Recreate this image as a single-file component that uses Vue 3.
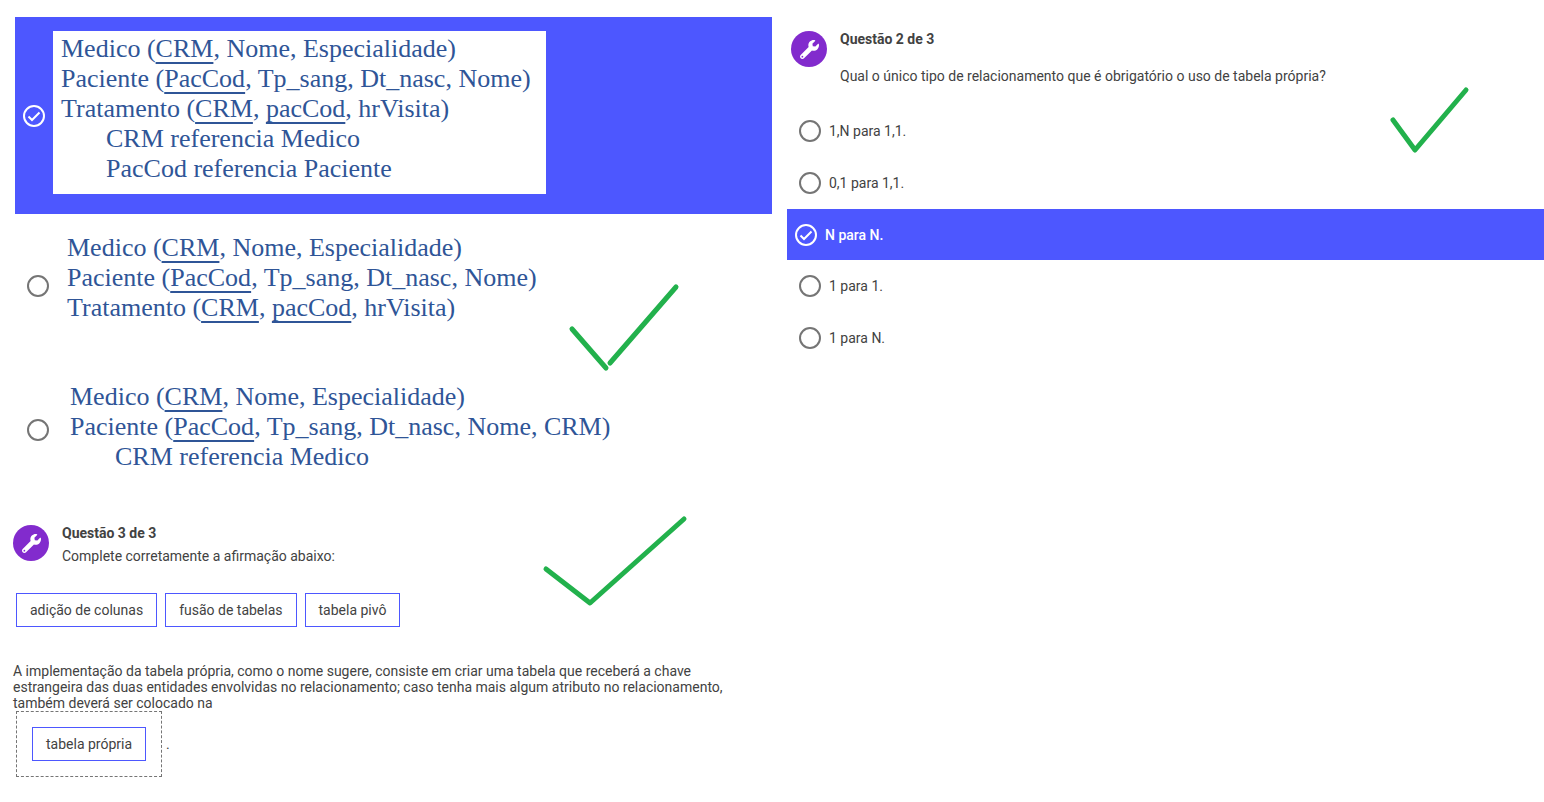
<script setup>
import { ref } from 'vue'

const medico = [{ t: 'Medico (' }, { t: 'CRM', key: true }, { t: ', Nome, Especialidade)' }]
const paciente = (end) => [{ t: 'Paciente (' }, { t: 'PacCod', key: true }, { t: `, Tp_sang, Dt_nasc, Nome${end}` }]
const tratamento = [
  { t: 'Tratamento (' }, { t: 'CRM', key: true }, { t: ', ' }, { t: 'pacCod', key: true }, { t: ', hrVisita)' },
]

const schemas = [
  {
    id: 'a',
    lines: [
      { parts: medico },
      { parts: paciente(')') },
      { parts: tratamento },
      { parts: [{ t: 'CRM referencia Medico' }], indent: true },
      { parts: [{ t: 'PacCod referencia Paciente' }], indent: true },
    ],
  },
  { id: 'b', lines: [{ parts: medico }, { parts: paciente(')') }, { parts: tratamento }] },
  {
    id: 'c',
    lines: [
      { parts: medico },
      { parts: paciente(', CRM)') },
      { parts: [{ t: 'CRM referencia Medico' }], indent: true },
    ],
  },
]
const relations = ['1,N para 1,1.', '0,1 para 1,1.', 'N para N.', '1 para 1.', '1 para N.']
const words = ['adição de colunas', 'fusão de tabelas', 'tabela pivô']

const schema = ref('a')
const relation = ref('N para N.')
</script>

<template>
  <main class="page">
    <div class="column left">
      <div class="schemas" role="radiogroup" aria-label="Esquema relacional">
        <label v-for="s in schemas" :key="s.id" class="option schema" :class="[s.id, { selected: schema === s.id }]">
          <span class="mark">
            <input v-model="schema" type="radio" name="schema" :value="s.id" />
            <svg v-if="schema === s.id" viewBox="0 0 22 22" aria-hidden="true"><path d="M5.500 11.500l3.500 3.500 7.500-7.500" /></svg>
          </span>
          <span class="sheet">
            <span v-for="(line, i) in s.lines" :key="i" class="line" :class="{ indent: line.indent }"><span v-for="(p, j) in line.parts" :key="j" :class="{ key: p.key }">{{ p.t }}</span></span>
          </span>
        </label>
      </div>

      <section class="question third">
        <header class="head">
          <span class="badge">
            <svg viewBox="0 0 512 512" aria-hidden="true"><path d="M507.7 109.1c-2.2-9-13.5-12.1-20.1-5.5l-74.4 74.4-67.9-11.3-11.3-67.9 74.4-74.4c6.600-6.600 3.400-17.900-5.700-20.200-47.400-11.700-99.600.900-136.600 37.900-39.600 39.600-50.500 97.100-34.100 147.200L18.700 402.800c-25 25-25 65.500 0 90.500s65.500 25 90.500 0l213.200-213.200c50.100 16.700 107.500 5.700 147.400-34.200 37.100-37.100 49.700-89.300 37.900-136.800zM64 472c-13.300 0-24-10.700-24-24 0-13.300 10.700-24 24-24s24 10.700 24 24c0 13.300-10.700 24-24 24z" /></svg>
          </span>
          <div>
            <h2>Questão 3 de 3</h2>
            <p>Complete corretamente a afirmação abaixo:</p>
          </div>
        </header>
        <div class="words">
          <button v-for="w in words" :key="w" type="button" class="chip">{{ w }}</button>
        </div>
        <div class="statement">
          A implementação da tabela própria, como o nome sugere, consiste em criar uma tabela que receberá a chave
          estrangeira das duas entidades envolvidas no relacionamento; caso tenha mais algum atributo no relacionamento,
          também deverá ser colocado na
          <div class="answer"><span class="drop"><button type="button" class="chip">tabela própria</button></span><span>.</span></div>
        </div>
      </section>

      <svg class="tick tick-schema" width="114" height="90" viewBox="0 0 114 90" aria-hidden="true"><path d="M5 46L39 85M43 80L109 4" /></svg>
      <svg class="tick tick-words" width="150" height="96" viewBox="0 0 150 96" aria-hidden="true"><path d="M5 56L49 90L143 6" /></svg>
    </div>

    <div class="column right">
      <section class="question second">
        <header class="head">
          <span class="badge">
            <svg viewBox="0 0 512 512" aria-hidden="true"><path d="M507.7 109.1c-2.2-9-13.5-12.1-20.1-5.5l-74.4 74.4-67.9-11.3-11.3-67.9 74.4-74.4c6.600-6.600 3.400-17.900-5.700-20.200-47.400-11.700-99.600.900-136.600 37.900-39.600 39.600-50.500 97.100-34.100 147.200L18.700 402.800c-25 25-25 65.500 0 90.500s65.500 25 90.500 0l213.200-213.200c50.100 16.700 107.500 5.700 147.400-34.200 37.100-37.100 49.700-89.300 37.900-136.800zM64 472c-13.300 0-24-10.700-24-24 0-13.300 10.700-24 24-24s24 10.700 24 24c0 13.300-10.700 24-24 24z" /></svg>
          </span>
          <div>
            <h2>Questão 2 de 3</h2>
            <p>Qual o único tipo de relacionamento que é obrigatório o uso de tabela própria?</p>
          </div>
        </header>
        <div class="relations" role="radiogroup" aria-label="Tipo de relacionamento">
          <label v-for="r in relations" :key="r" class="option relation" :class="{ selected: relation === r }">
            <span class="mark">
              <input v-model="relation" type="radio" name="relation" :value="r" />
              <svg v-if="relation === r" viewBox="0 0 22 22" aria-hidden="true"><path d="M5.500 11.500l3.500 3.500 7.500-7.500" /></svg>
            </span>
            <span>{{ r }}</span>
          </label>
        </div>
      </section>
      <svg class="tick tick-relation" width="84" height="72" viewBox="0 0 84 72" aria-hidden="true"><path d="M5 37L27 67L78 7" /></svg>
    </div>
  </main>
</template>

<style>
body {
  margin: 0;
  background: #fff;
}
</style>

<style scoped>
.page {
  display: grid;
  grid-template-columns: 1fr 1fr;
  color: #424242;
  font: 14px/16px Roboto, 'Noto Sans', sans-serif;
}
.column {
  position: relative;
  min-width: 0;
}
.left {
  padding-top: 17px;
}
.right {
  padding: 31px 0 0 15px;
}
.schemas {
  padding-left: 15px;
}
.option {
  display: flex;
  align-items: center;
  box-sizing: border-box;
  padding-left: 12px;
  gap: 8px;
}
.option.selected {
  padding-left: 8px;
  background: #4d57ff;
  color: #fff;
}
.mark {
  display: grid;
  flex: none;
  width: 22px;
  height: 22px;
}
.mark > * {
  grid-area: 1 / 1;
}
.mark input {
  appearance: none;
  box-sizing: border-box;
  width: 22px;
  height: 22px;
  margin: 0;
  border: 2px solid #757575;
  border-radius: 50%;
}
.mark input:checked {
  border-color: #fff;
}
.mark svg {
  z-index: 1;
  fill: none;
  stroke: #fff;
  stroke-width: 2;
  pointer-events: none;
}
.sheet {
  color: #2f5597;
  font: 26px/30px 'Liberation Serif', serif;
  white-space: nowrap;
}
.line {
  display: block;
}
.indent {
  padding-left: 45px;
}
.key {
  text-decoration: underline;
  text-decoration-thickness: 2px;
  text-underline-offset: 5px;
  text-decoration-skip-ink: none;
}
.a .sheet {
  margin: 14px 0 20px;
  padding: 3px 15px 10px 8px;
  background: #fff;
}
.b .sheet {
  margin: 19px 0 35px 10px;
}
.c .sheet {
  margin: 24px 0 30px 13px;
}
.head {
  display: flex;
}
.badge {
  display: grid;
  place-items: center;
  flex: none;
  width: 36px;
  height: 36px;
  margin-right: 13px;
  border-radius: 50%;
  background: #822bcd;
}
.badge svg {
  width: 19px;
  height: 19px;
  fill: #fff;
}
h2 {
  margin: 0;
  font-size: 14px;
  font-weight: 700;
  line-height: 16px;
}
.head p {
  margin: 7px 0 0;
}
.third {
  padding: 23px 20px 0 13px;
}
.words {
  display: flex;
  gap: 8px;
  margin: 29px 0 36px 3px;
}
.chip {
  height: 34px;
  padding: 0 13px;
  border: 1px solid #4d57ff;
  background: #fff;
  color: inherit;
  font: inherit;
}
.answer {
  display: flex;
  align-items: center;
  gap: 4px;
  margin-left: 3px;
}
.drop {
  display: flex;
  padding: 15px;
  border: 1px dashed #757575;
}
.second .head {
  padding-left: 4px;
}
.second .head p {
  margin-top: 21px;
}
.relations {
  margin-top: 21px;
}
.relation {
  min-height: 52px;
}
.relation.selected {
  min-height: 51px;
  font-weight: 500;
}
.tick {
  position: absolute;
  fill: none;
  stroke: #22b14c;
  stroke-width: 5;
  stroke-linecap: round;
  stroke-linejoin: round;
  pointer-events: none;
}
.tick-schema {
  left: 567px;
  top: 283px;
}
.tick-words {
  left: 541px;
  top: 513px;
}
.tick-relation {
  right: 72px;
  top: 83px;
}
</style>
